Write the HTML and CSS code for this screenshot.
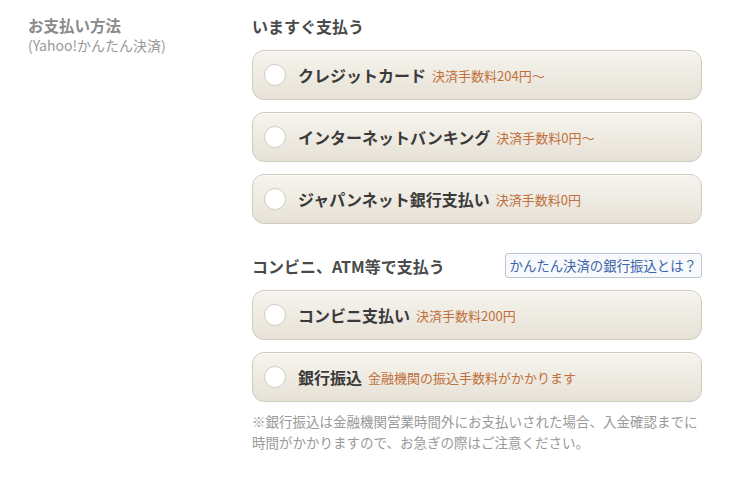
FILE: index.html
```html
<!DOCTYPE html>
<html lang="ja">
<head>
<meta charset="utf-8">
<link rel="stylesheet" href="styles.css">
</head>
<body>
<div class="page">
  <div class="side">
    <div class="side-title">お支払い方法</div>
    <div class="side-sub">(Yahoo!かんたん決済)</div>
  </div>
  <div class="main">
    <h2 class="group-title">いますぐ支払う</h2>
    <div class="options">
      <label class="option"><span class="radio"></span><span class="name">クレジットカード</span><span class="fee">決済手数料204円～</span></label>
      <label class="option"><span class="radio"></span><span class="name">インターネットバンキング</span><span class="fee">決済手数料0円～</span></label>
      <label class="option"><span class="radio"></span><span class="name">ジャパンネット銀行支払い</span><span class="fee">決済手数料0円</span></label>
    </div>
    <div class="group-head">
      <h2 class="group-title">コンビニ、ATM等で支払う</h2>
      <a class="help">かんたん決済の銀行振込とは？</a>
    </div>
    <div class="options">
      <label class="option"><span class="radio"></span><span class="name">コンビニ支払い</span><span class="fee">決済手数料200円</span></label>
      <label class="option"><span class="radio"></span><span class="name">銀行振込</span><span class="fee">金融機関の振込手数料がかかります</span></label>
    </div>
    <p class="note">※銀行振込は金融機関営業時間外にお支払いされた場合、入金確認までに時間がかかりますので、お急ぎの際はご注意ください。</p>
  </div>
</div>
</body>
</html>
```
FILE: styles.css
```css
* { box-sizing: border-box; }
body {
  margin: 0;
  background: #fff;
  font-family: "Noto Sans CJK JP", "Noto Sans", sans-serif;
  color: #333;
}
.page {
  display: grid;
  grid-template-columns: 224px 450px;
  padding: 14px 0 0 28px;
}
.side-title {
  font-size: 15.5px;
  font-weight: bold;
  color: #8a8a8a;
  line-height: 22px;
}
.side-sub {
  font-size: 14px;
  color: #999;
  line-height: 18px;
}
.main { display: flex; flex-direction: column; }
.group-title {
  margin: 0;
  font-size: 16px;
  font-weight: bold;
  color: #4a4a4a;
  line-height: 24px;
}
.options {
  display: flex;
  flex-direction: column;
  gap: 12px;
  margin-top: 12px;
}
.option {
  height: 50px;
  border: 1px solid #cfcac0;
  border-radius: 12px;
  background: linear-gradient(#f6f4ef, #e7e2d6);
  display: flex;
  align-items: center;
  padding-left: 11px;
  box-shadow: inset 0 1px 0 #fbfaf7;
}
.radio {
  width: 22px;
  height: 22px;
  border-radius: 50%;
  background: #fff;
  border: 1px solid #d2cdc4;
  flex: none;
  margin-right: 12px;
}
.name {
  font-size: 16px;
  font-weight: bold;
  color: #3a3a3a;
  margin-right: 6px;
}
.fee {
  font-size: 13px;
  color: #c0703a;
}
.group-head {
  margin-top: 29px;
  display: flex;
  justify-content: space-between;
  align-items: center;
}
.help {
  font-size: 13.4px;
  color: #3b64ad;
  border: 1px solid #bcc6d3;
  border-radius: 3px;
  background: #f7f9fb;
  padding: 3px 4px;
  line-height: 17px;
}
.group-head + .options { margin-top: 12px; }
.note {
  margin: 9px 0 0;
  font-size: 13.5px;
  line-height: 21px;
  color: #9a9a9a;
}
```
